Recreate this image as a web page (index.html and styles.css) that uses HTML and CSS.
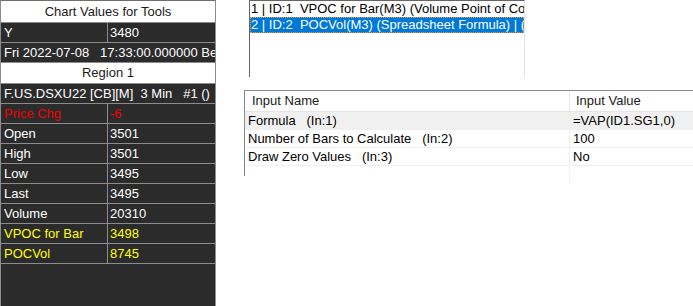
FILE: index.html
```html
<!DOCTYPE html>
<html lang="en">

<head>
    <meta charset="UTF-8">
    <title>Chart Values for Tools</title>
    <link rel="stylesheet" href="styles.css">
</head>

<body>
    <section id="vaerdier">
        <div class="overskrift">Chart Values for Tools</div>
        <div class="raekke"><span>Y</span><span>3480</span></div>
        <div class="raekke hel"><span>Fri 2022-07-08&nbsp;&nbsp;&nbsp;17:33:00.000000 Begin</span></div>
        <div class="overskrift">Region 1</div>
        <div class="raekke hel"><span>F.US.DSXU22 [CB][M]&nbsp;&nbsp;3 Min&nbsp;&nbsp;&nbsp;#1 ()</span></div>
        <div class="raekke roed"><span>Price Chg</span><span>-6</span></div>
        <div class="raekke"><span>Open</span><span>3501</span></div>
        <div class="raekke"><span>High</span><span>3501</span></div>
        <div class="raekke"><span>Low</span><span>3495</span></div>
        <div class="raekke"><span>Last</span><span>3495</span></div>
        <div class="raekke"><span>Volume</span><span>20310</span></div>
        <div class="raekke gul"><span>VPOC for Bar</span><span>3498</span></div>
        <div class="raekke gul"><span>POCVol</span><span>8745</span></div>
    </section>

    <section id="hoejre">
        <div id="studier">
            <div class="studie">1 | ID:1&nbsp;&nbsp;VPOC for Bar(M3) (Volume Point of Control for Bars) | ID:1</div>
            <div class="studie valgt">2 | ID:2&nbsp;&nbsp;POCVol(M3) (Spreadsheet Formula) | (M3)</div>
        </div>

        <div id="input">
            <div class="linje top"><span>Input Name</span><span>Input Value</span></div>
            <div class="linje markeret"><span>Formula&nbsp;&nbsp;&nbsp;(In:1)</span><span>=VAP(ID1.SG1,0)</span></div>
            <div class="linje"><span>Number of Bars to Calculate&nbsp;&nbsp;&nbsp;(In:2)</span><span>100</span></div>
            <div class="linje"><span>Draw Zero Values&nbsp;&nbsp;&nbsp;(In:3)</span><span>No</span></div>
            <div class="linje tom"><span></span><span></span></div>
        </div>
    </section>
</body>

</html>
```

FILE: styles.css
```css
body {
    margin: 0;
    display: flex;
    height: 306px;
    overflow: hidden;
    background-color: white;
}

#vaerdier {
    width: 214px;
    height: 305px;
    flex-shrink: 0;
    background-color: #2b2b2b;
    border-top: 1px solid #6e6e6e;
    border-left: 1px solid #8c8c8c;
    border-right: 1px solid #8c8c8c;
    font-family: "Liberation Sans", Arial, sans-serif;
    font-size: 13px;
    color: white;
}

.overskrift {
    height: 20px;
    line-height: 20px;
    background-color: white;
    color: #1a1a1a;
    text-align: center;
    border-bottom: 1px solid #8c8c8c;
}

#vaerdier .overskrift:first-child {
    height: 21px;
    line-height: 22px;
}

.raekke {
    display: grid;
    grid-template-columns: 107px 1fr;
    height: 19px;
    line-height: 19px;
    border-bottom: 1px solid #8c8c8c;
    white-space: nowrap;
    overflow: hidden;
}

.raekke span {
    padding-left: 3px;
}

.raekke span:first-child {
    border-right: 1px solid #8c8c8c;
}

.raekke span+span {
    padding-left: 2px;
}

.hel {
    display: block;
}

.hel span:first-child {
    border-right: none;
}

.roed {
    color: #f00000;
}

.gul {
    color: #ffff00;
}

#hoejre {
    flex: 1;
    font-family: "Liberation Sans", Arial, sans-serif;
    font-size: 13px;
    color: black;
}

#studier {
    margin-left: 33px;
    width: 274px;
    height: 76px;
    border-top: 1px solid #646464;
    border-left: 1px solid #646464;
    border-right: 1px solid #e3e3e3;
    overflow: hidden;
    white-space: nowrap;
}

.studie {
    height: 16px;
    line-height: 16px;
    padding-left: 1px;
    overflow: hidden;
}

.valgt {
    background-color: #0078d7;
    color: white;
    outline: 1px dotted #f29a2e;
    outline-offset: -1px;
}

#input {
    margin-top: 13px;
    margin-left: 28px;
    height: 85px;
    border-top: 1px solid #8a8a8a;
    border-left: 1px solid #8a8a8a;
    white-space: nowrap;
}

.linje {
    display: grid;
    grid-template-columns: 324px 200px;
    height: 17px;
    line-height: 17px;
    border-bottom: 1px solid #f0f0f0;
}

.linje span {
    padding-left: 3px;
}

.linje span+span {
    border-left: 1px solid #f0f0f0;
}

.top {
    height: 20px;
    line-height: 20px;
    border-bottom: 1px solid #e5e5e5;
    color: #1a1a1a;
}

.top span {
    padding-left: 7px;
}

.top span+span {
    border-left: 1px solid #e5e5e5;
    padding-left: 6px;
}

.markeret {
    background-color: #f0f0f0;
}

.tom {
    border-bottom: none;
}
```
